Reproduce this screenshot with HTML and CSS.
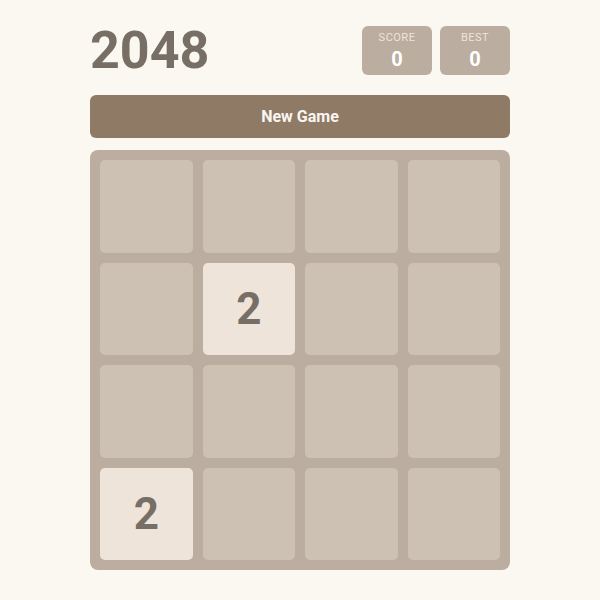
FILE: index.html
```html
<!DOCTYPE html>
<html lang="en">
<head>
<meta charset="utf-8">
<title>2048</title>
<link rel="stylesheet" href="styles.css">
</head>
<body>
<main class="game">
  <header class="header">
    <h1 class="title">2048</h1>
    <div class="scores">
      <div class="score-box">
        <span class="score-label">SCORE</span>
        <span class="score-value">0</span>
      </div>
      <div class="score-box">
        <span class="score-label">BEST</span>
        <span class="score-value">0</span>
      </div>
    </div>
  </header>
  <button class="new-game" type="button">New Game</button>
  <div class="board">
    <div class="cell"></div>
    <div class="cell"></div>
    <div class="cell"></div>
    <div class="cell"></div>
    <div class="cell"></div>
    <div class="cell tile-2">2</div>
    <div class="cell"></div>
    <div class="cell"></div>
    <div class="cell"></div>
    <div class="cell"></div>
    <div class="cell"></div>
    <div class="cell"></div>
    <div class="cell tile-2">2</div>
    <div class="cell"></div>
    <div class="cell"></div>
    <div class="cell"></div>
  </div>
</main>
</body>
</html>
```

FILE: styles.css
```css
* {
  box-sizing: border-box;
}

html,
body {
  margin: 0;
  padding: 0;
  background: #faf8f0;
}

body {
  font-family: Roboto, "Liberation Sans", sans-serif;
  color: #776e65;
}

.game {
  width: 420px;
  margin: 0 auto;
  padding-top: 26px;
}

.header {
  height: 49px;
  display: flex;
  align-items: center;
  justify-content: space-between;
  margin-bottom: 20px;
}

.title {
  margin: 0;
  font-size: 52px;
  line-height: 1;
  font-weight: 700;
  color: #776e65;
}

.scores {
  display: flex;
  gap: 8px;
  height: 49px;
}

.score-box {
  width: 70px;
  height: 49px;
  background: #bbada0;
  border-radius: 6px;
  display: flex;
  flex-direction: column;
  align-items: center;
  padding-top: 5px;
}

.score-label {
  font-size: 11px;
  line-height: 14px;
  letter-spacing: 0.5px;
  color: #eee4da;
}

.score-value {
  margin-top: 2px;
  font-size: 20px;
  line-height: 24px;
  font-weight: 700;
  color: #ffffff;
}

.new-game {
  display: block;
  width: 100%;
  height: 43px;
  margin: 0 0 12px;
  border: 0;
  border-radius: 6px;
  background: #8f7a66;
  color: #f9f6f2;
  font-family: inherit;
  font-size: 16px;
  font-weight: 700;
  cursor: pointer;
}

.board {
  width: 420px;
  height: 420px;
  background: #bbada0;
  border-radius: 8px;
  padding: 10px;
  display: grid;
  grid-template-columns: repeat(4, 1fr);
  grid-template-rows: repeat(4, 1fr);
  gap: 10px;
}

.cell {
  background: #cdc1b4;
  border-radius: 5px;
  display: flex;
  align-items: center;
  justify-content: center;
  font-size: 44px;
  font-weight: 700;
  color: #776e65;
}

.tile-2 {
  background: #eee4da;
}
```
